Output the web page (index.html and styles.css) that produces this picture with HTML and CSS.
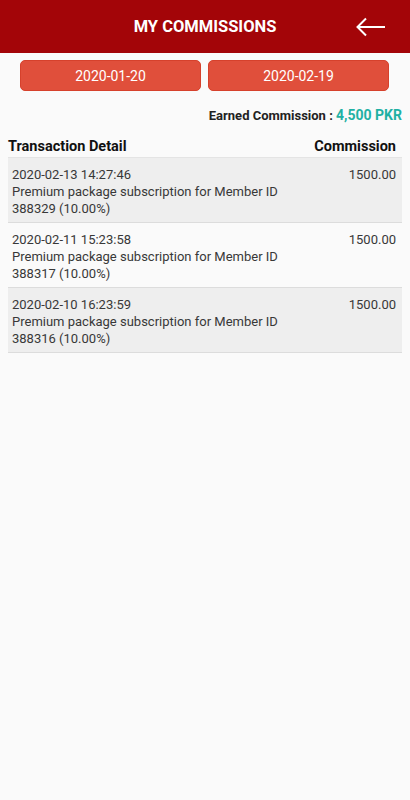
FILE: index.html
```html
<!DOCTYPE html>
<html>
  <head>
    <title>My Commissions</title>
    <link rel="stylesheet" href="styles.css">
  </head>
  <body>
    <header class="appbar">
      <span></span>
      <h1 class="appbar-title">MY COMMISSIONS</h1>
      <a class="back" href="#">
        <svg width="30" height="20" viewBox="0 0 30 20">
          <path d="M29 10H2M10 1.5L1.5 10L10 18.5" fill="none" stroke="#fff" stroke-width="2"/>
        </svg>
      </a>
    </header>

    <div class="dates">
      <button class="date-btn">2020-01-20</button>
      <button class="date-btn">2020-02-19</button>
    </div>

    <p class="earned">Earned Commission : <span class="earned-value">4,500 PKR</span></p>

    <div class="table-head">
      <span>Transaction Detail</span>
      <span>Commission</span>
    </div>

    <ul class="rows">
      <li class="row">
        <div class="detail">
          <div>2020-02-13 14:27:46</div>
          <div>Premium package subscription for Member ID 388329 (10.00%)</div>
        </div>
        <div class="amount">1500.00</div>
      </li>
      <li class="row">
        <div class="detail">
          <div>2020-02-11 15:23:58</div>
          <div>Premium package subscription for Member ID 388317 (10.00%)</div>
        </div>
        <div class="amount">1500.00</div>
      </li>
      <li class="row">
        <div class="detail">
          <div>2020-02-10 16:23:59</div>
          <div>Premium package subscription for Member ID 388316 (10.00%)</div>
        </div>
        <div class="amount">1500.00</div>
      </li>
    </ul>
  </body>
</html>
```

FILE: styles.css
```css
body {
  margin: 0;
  background-color: #fafafa;
  font-family: Roboto, "Liberation Sans", sans-serif;
  color: #222;
}
.appbar {
  height: 53px;
  background-color: #a30508;
  display: grid;
  grid-template-columns: 1fr auto 1fr;
  align-items: center;
}
.appbar-title {
  margin: 0;
  color: #fff;
  font-size: 16.5px;
  font-weight: bold;
}
.back {
  justify-self: end;
  margin-right: 24px;
  display: flex;
}
.dates {
  display: flex;
  gap: 7px;
  padding: 7px 21px 0 20px;
}
.date-btn {
  flex: 1;
  height: 31px;
  background-color: #e04f3b;
  border: 1px solid #d6412c;
  border-radius: 5px;
  color: #fff;
  font-family: inherit;
  font-size: 14px;
}
.earned {
  margin: 14px 0 0;
  padding-right: 8px;
  text-align: right;
  line-height: 20px;
  font-size: 13px;
  font-weight: bold;
  color: #222;
}
.earned-value {
  color: #1fb1a4;
  font-size: 14px;
}
.table-head {
  display: flex;
  justify-content: space-between;
  margin-top: 11px;
  padding: 0 14px 0 8px;
  line-height: 20px;
  font-size: 14.5px;
  font-weight: bold;
  color: #111;
}
.rows {
  list-style-type: none;
  margin: 0 8px;
  padding: 0;
  border-top: 1px solid #e4e4e4;
}
.row {
  display: flex;
  justify-content: space-between;
  padding: 8px 6px 5px 4px;
  border-bottom: 1px solid #dcdcdc;
  font-size: 13px;
  line-height: 17px;
  color: #383838;
}
.row:nth-child(odd) {
  background-color: #eeeeee;
}
.detail {
  width: 275px;
}
```
